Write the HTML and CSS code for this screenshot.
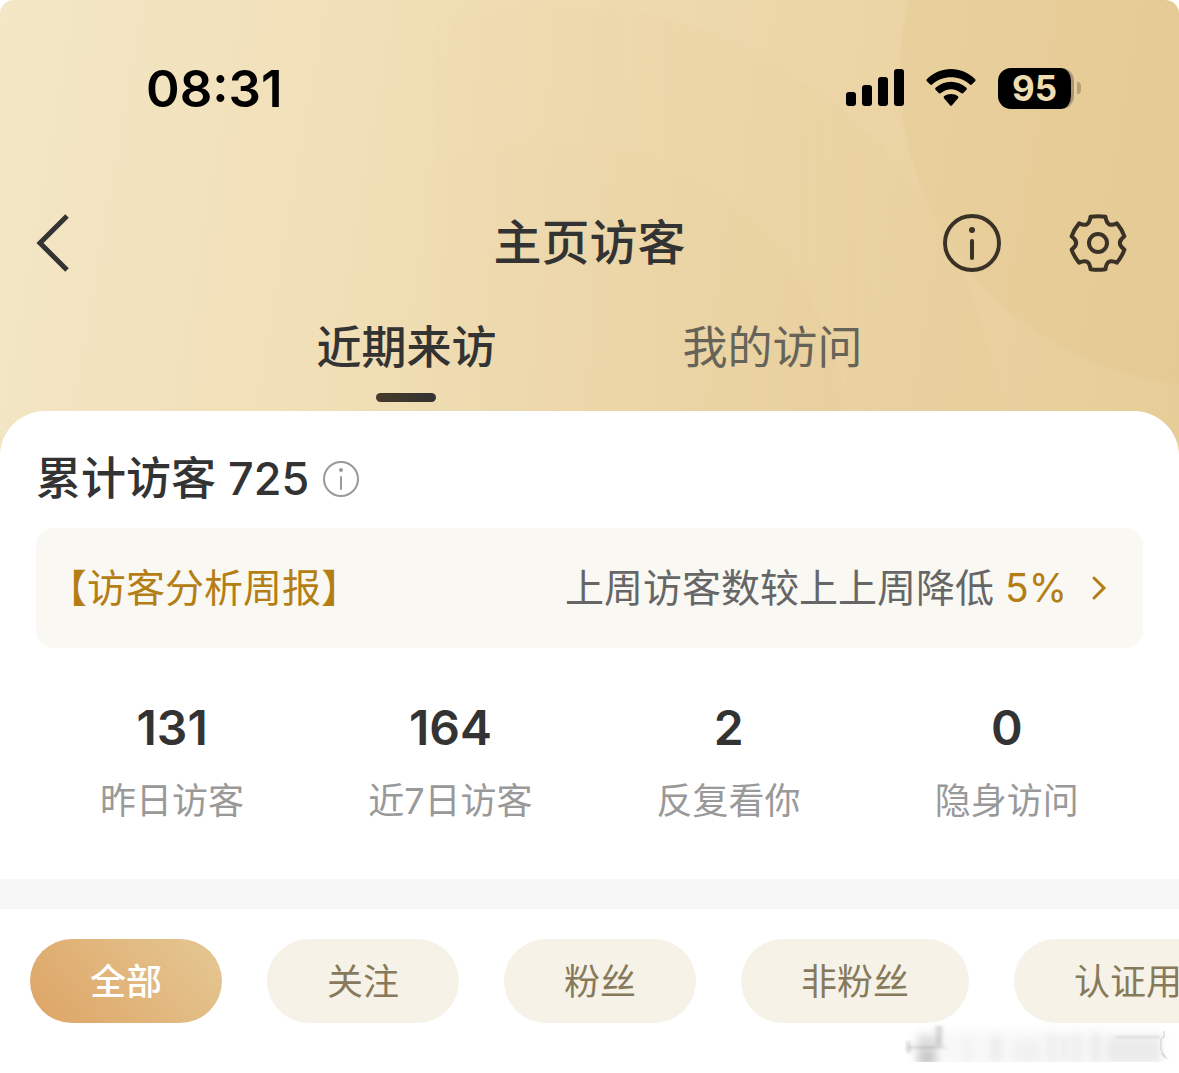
FILE: index.html
```html
<!DOCTYPE html>
<html lang="zh-CN">
<head>
    <meta charset="UTF-8">
    <meta name="viewport" content="width=device-width, initial-scale=1.0">
    <title>主页访客</title>
    <link rel="stylesheet" href="styles.css">
</head>
<body>
    <header class="header">
        <div class="status-bar">
            <span class="time">08:31</span>
            <div class="status-icons">
                <svg width="58" height="38" viewBox="0 0 58 38" aria-hidden="true">
                    <rect x="0" y="23" width="10" height="14" rx="3"/>
                    <rect x="16" y="16" width="10" height="21" rx="3"/>
                    <rect x="32" y="8" width="10" height="29" rx="3"/>
                    <rect x="48" y="0" width="10" height="37" rx="3"/>
                </svg>
                <svg width="50" height="38" viewBox="0 0 50 38" aria-hidden="true">
                    <path d="M0.8 10.2Q0 11.2 0.9 12.2L4.2 15.5Q5.1 16.3 6.1 15.4C17 5.7 33 5.7 43.9 15.4Q44.9 16.3 45.8 15.5L49.1 12.2Q50 11.2 49.2 10.2C35.5 -3.4 14.5 -3.4 0.8 10.2Z"/>
                    <path d="M9.5 18.8Q8.7 19.8 9.5 20.7L13 24.2Q13.9 25 14.9 24.1C20.8 19 29.2 19 35.1 24.1Q36.1 25 37 24.2L40.5 20.7Q41.3 19.8 40.5 18.8C31.5 10.7 18.5 10.7 9.5 18.8Z"/>
                    <path d="M18 27.3Q17.2 28.3 18 29.2L24.2 36.5Q25 37.3 25.8 36.5L32 29.2Q32.8 28.3 32 27.3C28 24.2 22 24.2 18 27.3Z"/>
                </svg>
                <div class="battery"><span class="battery-level">95</span></div>
            </div>
        </div>

        <div class="navbar">
            <button type="button" class="icon-button" aria-label="返回">
                <svg width="34" height="58" viewBox="0 0 34 58" aria-hidden="true">
                    <path d="M31 2L4 29L31 56" fill="none" stroke="#333" stroke-width="5"/>
                </svg>
            </button>
            <h1>主页访客</h1>
            <div class="nav-actions">
                <button type="button" class="icon-button" aria-label="说明">
                    <svg width="58" height="58" viewBox="0 0 58 58" aria-hidden="true">
                        <circle cx="29" cy="29" r="27" fill="none" stroke="#3a3226" stroke-width="4"/>
                        <circle cx="29" cy="16" r="3" fill="#3a3226"/>
                        <path d="M29 27V44" stroke="#3a3226" stroke-width="4" stroke-linecap="round"/>
                    </svg>
                </button>
                <button type="button" class="icon-button" aria-label="设置">
                    <svg width="58" height="58" viewBox="-29 -29 58 58" fill="none" stroke="#3a3226" stroke-width="4" stroke-linejoin="round" aria-hidden="true">
                        <path d="M-7.5 -26.2Q0 -27.3 7.5 -26.2C8.5 -18.5 12 -16.5 18.9 -19.6Q24 -13.5 26.4 -6.6C20.3 -2.5 20.3 2.5 26.4 6.6Q24 13.5 18.9 19.6C12 16.5 8.5 18.5 7.5 26.2Q0 27.3 -7.5 26.2C-8.5 18.5 -12 16.5 -18.9 19.6Q-24 13.5 -26.4 6.6C-20.3 2.5 -20.3 -2.5 -26.4 -6.6Q-24 -13.5 -18.9 -19.6C-12 -16.5 -8.5 -18.5 -7.5 -26.2Z"/>
                        <circle r="9"/>
                    </svg>
                </button>
            </div>
        </div>

        <nav class="tabs">
            <button type="button" class="tab active">近期来访</button>
            <button type="button" class="tab">我的访问</button>
        </nav>
    </header>

    <main class="card">
        <section class="summary">
            <div class="total">
                <h2>累计访客 725</h2>
                <button type="button" class="icon-button" aria-label="累计访客说明">
                    <svg width="36" height="36" viewBox="0 0 36 36" aria-hidden="true">
                        <circle cx="18" cy="18" r="17" fill="none" stroke="#999" stroke-width="2"/>
                        <circle cx="18" cy="9" r="2" fill="#999"/>
                        <path d="M18 16V28" stroke="#999" stroke-width="2" stroke-linecap="round"/>
                    </svg>
                </button>
            </div>
            <a href="#" class="report">
                <span class="report-title">【访客分析周报】</span>
                <span class="report-text">上周访客数较上上周降低 <em>5%</em></span>
                <svg width="16" height="26" viewBox="0 0 16 26" aria-hidden="true">
                    <path d="M3 3L13 13L3 23" fill="none" stroke="#b57e14" stroke-width="3" stroke-linecap="round"/>
                </svg>
            </a>
        </section>

        <section class="stats">
            <div class="stat"><strong>131</strong><span>昨日访客</span></div>
            <div class="stat"><strong>164</strong><span>近7日访客</span></div>
            <div class="stat"><strong>2</strong><span>反复看你</span></div>
            <div class="stat"><strong>0</strong><span>隐身访问</span></div>
        </section>

        <div class="filters">
            <button type="button" class="chip active">全部</button>
            <button type="button" class="chip">关注</button>
            <button type="button" class="chip">粉丝</button>
            <button type="button" class="chip">非粉丝</button>
            <button type="button" class="chip">认证用户</button>
        </div>
    </main>

    <svg class="smudge" width="264" height="42" viewBox="0 0 264 42" aria-hidden="true">
        <defs>
            <filter id="soft" filterUnits="userSpaceOnUse" x="0" y="0" width="264" height="39">
                <feGaussianBlur stdDeviation="4 5"/>
            </filter>
            <filter id="fine" filterUnits="userSpaceOnUse" x="0" y="0" width="264" height="42">
                <feGaussianBlur stdDeviation="2 1"/>
            </filter>
        </defs>
        <g filter="url(#soft)" fill="#888">
            <rect x="12" y="12" width="20" height="30" opacity="0.3"/>
            <rect x="14" y="30" width="16" height="12" opacity="0.3"/>
            <rect x="34" y="8" width="222" height="34" opacity="0.06"/>
            <rect x="58" y="16" width="8" height="26" opacity="0.07"/>
            <rect x="88" y="12" width="7" height="30" opacity="0.14"/>
            <rect x="108" y="18" width="28" height="24" opacity="0.07"/>
            <rect x="144" y="10" width="5" height="32" opacity="0.16"/>
            <rect x="157" y="10" width="5" height="32" opacity="0.14"/>
            <rect x="170" y="10" width="5" height="32" opacity="0.16"/>
            <rect x="187" y="10" width="7" height="32" opacity="0.16"/>
            <rect x="202" y="14" width="54" height="28" opacity="0.12"/>
        </g>
        <g filter="url(#fine)" fill="#777">
            <rect x="2" y="18" width="3" height="12" opacity="0.4"/>
            <rect x="2" y="23" width="38" height="3" opacity="0.2"/>
            <rect x="31" y="3" width="6" height="20" opacity="0.3"/>
            <rect x="210" y="13" width="46" height="2" opacity="0.2"/>
        </g>
        <path d="M259 8V14L256 16V27L262 36M256 30L260 35" fill="none" stroke="#ccc" stroke-width="1"/>
    </svg>
</body>
</html>
```

FILE: styles.css
```css
* {
    box-sizing: border-box;
}

body {
    position: relative;
    margin: 0;
    min-height: 100vh;
    overflow-x: hidden;
    background: #fff;
    color: #333;
    font-family: Inter, "Noto Sans CJK SC", sans-serif;
}

h1,
h2 {
    margin: 0;
    font-weight: 500;
}

button {
    border: none;
    padding: 0;
    background: none;
    color: inherit;
    font-family: inherit;
    cursor: pointer;
}

svg {
    display: block;
}

/* Header */
.header {
    position: relative;
    isolation: isolate;
    padding-bottom: 54px;
    border-radius: 14px 14px 0 0;
    overflow: hidden;
    background: linear-gradient(100deg, #f3e7c6 0%, #f2e2bd 18%, #efdcb2 40%, #ecd6a8 65%, #e6cd98 100%);
}

/* Large overlapping discs, fading out to the left */
.header::before {
    content: "";
    position: absolute;
    inset: 0;
    z-index: -1;
    background:
        radial-gradient(circle at calc(100% + 31px) 75px, rgba(224, 188, 124, 0.18) 308px, transparent 312px),
        radial-gradient(circle at 47% 430px, rgba(228, 196, 136, 0.14) 286px, transparent 292px),
        radial-gradient(circle at 47% 450px, rgba(228, 196, 136, 0.12) 442px, transparent 448px);
    -webkit-mask-image: linear-gradient(90deg, transparent 35%, #000 75%);
    mask-image: linear-gradient(90deg, transparent 35%, #000 75%);
}

.status-bar {
    display: flex;
    align-items: center;
    justify-content: space-between;
    height: 176px;
    padding: 0 98px 0 146px;
    color: #000;
}

.time {
    font-size: 51px;
    font-weight: 600;
}

.status-icons {
    display: flex;
    align-items: center;
    gap: 22px;
}

.battery {
    display: flex;
    align-items: center;
    gap: 3px;
}

.battery::after {
    content: "";
    width: 4px;
    height: 12px;
    border-radius: 0 6px 6px 0;
    background: #b3a076;
}

.battery-level {
    width: 76px;
    height: 41px;
    border-radius: 13px;
    border-right: 3px solid #a8977a;
    background: #000;
    color: #efdcb1;
    font-size: 35px;
    font-weight: 700;
    line-height: 41px;
    text-align: center;
}

.navbar {
    display: grid;
    grid-template-columns: 1fr auto 1fr;
    align-items: center;
    height: 134px;
    padding: 0 52px 0 36px;
}

.navbar h1 {
    padding-left: 16px;
    font-size: 48px;
    line-height: 72px;
}

.nav-actions {
    display: flex;
    justify-content: flex-end;
    gap: 68px;
}

.icon-button {
    justify-self: start;
}

.tabs {
    display: flex;
    justify-content: center;
    gap: 186px;
}

.tab {
    display: flex;
    flex-direction: column;
    align-items: center;
    gap: 7px;
    color: #666459;
    font-size: 45px;
    line-height: 76px;
}

.tab.active {
    color: #333;
    font-weight: 500;
}

.tab::after {
    content: "";
    width: 60px;
    height: 9px;
    border-radius: 5px;
}

.tab.active::after {
    background: linear-gradient(90deg, #463a28, #333);
}

/* Card */
.card {
    position: relative;
    margin-top: -45px;
    padding-top: 36px;
    border-radius: 45px 45px 0 0;
    background: #fff;
}

.summary {
    padding: 0 36px;
}

.total {
    display: flex;
    align-items: center;
    gap: 14px;
    margin-bottom: 17px;
}

.total h2 {
    font-size: 45px;
    line-height: 64px;
}

.report {
    display: flex;
    align-items: center;
    height: 120px;
    padding: 0 36px 0 12px;
    border-radius: 18px;
    background: #f9f8f3;
    color: #666;
    font-size: 39px;
    line-height: 60px;
    text-decoration: none;
}

.report-title {
    flex: 1;
    color: #b57e14;
}

.report-text {
    margin-right: 24px;
}

.report em {
    color: #b57e14;
    font-style: normal;
}

.stats {
    display: grid;
    grid-template-columns: repeat(4, 1fr);
    padding: 44px 33px 51px;
    border-bottom: 30px solid #f7f7f7;
}

.stat {
    display: flex;
    flex-direction: column;
    align-items: center;
    gap: 10px;
}

.stat strong {
    font-size: 48px;
    font-weight: 600;
    line-height: 72px;
}

.stat span {
    color: #999;
    font-size: 36px;
    line-height: 54px;
}

/* Filter chips */
.filters {
    display: flex;
    gap: 45px;
    padding: 30px;
    overflow: hidden;
}

.chip {
    flex: none;
    height: 84px;
    padding: 0 60px 4px;
    border-radius: 42px;
    background: #f6f2e7;
    color: #877a5c;
    font-size: 36px;
}

.chip.active {
    background: linear-gradient(50deg, #dda465, #e5c894);
    color: #fff;
    font-weight: 500;
}

.smudge {
    position: absolute;
    right: 10px;
    bottom: 8px;
}
```
